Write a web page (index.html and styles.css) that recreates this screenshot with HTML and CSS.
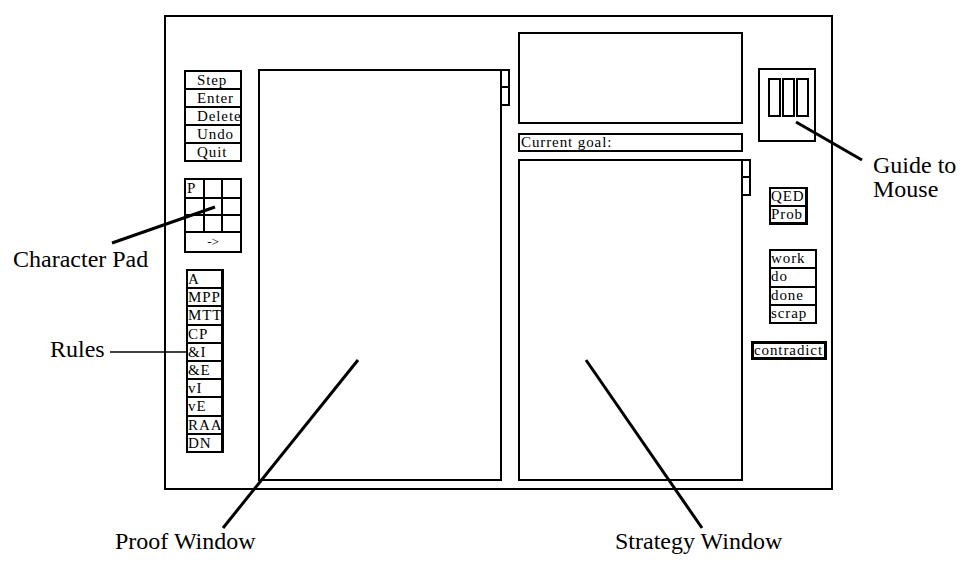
FILE: index.html
```html
<!DOCTYPE html>
<html>
<head>
<meta charset="utf-8">
<link rel="stylesheet" href="styles.css">
</head>
<body>
<div class="figure">
  <div class="frame">
    <div class="col-left">
      <div class="btns">
        <div class="btn">Step</div>
        <div class="btn">Enter</div>
        <div class="btn">Delete</div>
        <div class="btn">Undo</div>
        <div class="btn">Quit</div>
      </div>
      <div class="pad">
        <div class="cell">P</div><div class="cell"></div><div class="cell"></div>
        <div class="cell"></div><div class="cell"></div><div class="cell"></div>
        <div class="cell"></div><div class="cell"></div><div class="cell"></div>
        <div class="arrow">-&gt;</div>
      </div>
      <div class="rules">
        <div class="rule">A</div>
        <div class="rule">MPP</div>
        <div class="rule">MTT</div>
        <div class="rule">CP</div>
        <div class="rule">&amp;I</div>
        <div class="rule">&amp;E</div>
        <div class="rule">vI</div>
        <div class="rule">vE</div>
        <div class="rule">RAA</div>
        <div class="rule">DN</div>
      </div>
    </div>
    <div class="col-proof">
      <div class="win">
        <div class="tabs"><div class="tab"></div><div class="tab"></div></div>
      </div>
    </div>
    <div class="col-mid">
      <div class="topbox"></div>
      <div class="goal">Current goal:</div>
      <div class="win strategy">
        <div class="tabs"><div class="tab"></div><div class="tab"></div></div>
      </div>
    </div>
    <div class="col-right">
      <div class="guide">
        <div class="mouse"><div class="mbtn"></div><div class="mbtn"></div><div class="mbtn"></div></div>
      </div>
      <div class="stack qed"><div class="item">QED</div><div class="item">Prob</div></div>
      <div class="stack work">
        <div class="item">work</div>
        <div class="item">do</div>
        <div class="item">done</div>
        <div class="item">scrap</div>
      </div>
      <div class="contra">contradict</div>
    </div>
  </div>

  <svg class="leaders" width="974" height="566" viewBox="0 0 974 566">
    <line x1="796" y1="122" x2="862" y2="160" class="thick"/>
    <line x1="215" y1="207" x2="112" y2="243" class="thick"/>
    <line x1="110" y1="352" x2="187" y2="352" class="thin"/>
    <line x1="358" y1="360" x2="223" y2="528" class="thick"/>
    <line x1="586" y1="360" x2="702" y2="528" class="thick"/>
  </svg>

  <div class="lbl l-guide">Guide to<br>Mouse</div>
  <div class="lbl l-pad">Character Pad</div>
  <div class="lbl l-rules">Rules</div>
  <div class="lbl l-proof">Proof Window</div>
  <div class="lbl l-strat">Strategy Window</div>
</div>
</body>
</html>
```

FILE: styles.css
```css
* { box-sizing: border-box; }
body {
  margin: 0;
  background: #fff;
  color: #000;
  font-family: "Liberation Serif", "Times New Roman", serif;
}
.figure {
  position: relative;
  width: 974px;
  height: 566px;
  padding: 15px 0 0 164px;
  overflow: hidden;
}
.frame {
  width: 669px;
  height: 475px;
  border: 2px solid #000;
  display: flex;
  padding: 0 4px 7px 18px;
  font-size: 15px;
  letter-spacing: 0.9px;
}

/* left column */
.col-left {
  width: 58px;
  padding-top: 53px;
  display: flex;
  flex-direction: column;
  gap: 16px;
}
.btns {
  display: flex;
  flex-direction: column;
  gap: 2px;
  background: #000;
  padding: 2px;
  height: 92px;
}
.btn {
  flex: 1;
  background: #fff;
  line-height: 16px;
  padding-left: 11px;
  white-space: nowrap;
  overflow-x: clip;
  overflow-y: visible;
}
.pad {
  display: grid;
  grid-template-columns: repeat(3, 1fr);
  grid-template-rows: 17px 15px 15px 18px;
  gap: 2px;
  background: #000;
  padding: 2px;
  height: 75px;
  width: 58px;
}
.cell {
  background: #fff;
  line-height: 16px;
  padding-left: 1px;
}
.arrow {
  grid-column: 1 / 4;
  background: #fff;
  font-size: 13px;
  line-height: 18px;
  text-align: center;
  letter-spacing: 0;
}
.rules {
  margin-left: 2px;
  width: 38px;
  height: 184px;
  display: flex;
  flex-direction: column;
  gap: 2px;
  background: #000;
  padding: 2px 3px 2px 2px;
}
.rule {
  flex: 1;
  background: #fff;
  line-height: 16px;
  white-space: nowrap;
  overflow-x: clip;
  overflow-y: visible;
}

/* windows */
.col-proof {
  width: 244px;
  margin-left: 16px;
  padding-top: 52px;
  display: flex;
  flex-direction: column;
}
.win {
  flex: 1;
  border: 2px solid #000;
  position: relative;
}
.tabs {
  position: absolute;
  left: 100%;
  top: -2px;
  width: 10px;
  display: flex;
  flex-direction: column;
}
.tab {
  height: 19px;
  border: 2px solid #000;
  border-left: none;
}
.tab + .tab { border-top: none; height: 18px; }

.col-mid {
  width: 225px;
  margin-left: 16px;
  padding-top: 15px;
  display: flex;
  flex-direction: column;
}
.topbox {
  height: 92px;
  border: 2px solid #000;
}
.goal {
  margin-top: 9px;
  height: 19px;
  border: 2px solid #000;
  line-height: 15px;
  padding-left: 1px;
}
.strategy { margin-top: 7px; }

/* right column */
.col-right {
  width: 76px;
  margin-left: 8px;
  padding-top: 51px;
  display: flex;
  flex-direction: column;
  align-items: flex-start;
}
.guide {
  margin-left: 7px;
  width: 58px;
  height: 74px;
  border: 2px solid #000;
  padding: 8px 0 0 8px;
}
.mouse {
  display: flex;
  gap: 1px;
}
.mbtn {
  width: 13px;
  height: 39px;
  border: 2px solid #000;
}
.stack {
  margin-left: 18px;
  display: flex;
  flex-direction: column;
  gap: 2px;
  background: #000;
}
.qed {
  margin-top: 45px;
  width: 39px;
  height: 38px;
  padding: 2px 3px 3px 2px;
}
.work {
  margin-top: 24px;
  width: 48px;
  height: 75px;
  padding: 2px;
}
.item {
  flex: 1;
  background: #fff;
  line-height: 15px;
  white-space: nowrap;
  overflow-x: clip;
  overflow-y: visible;
}
.contra {
  margin-top: 17px;
  width: 76px;
  height: 19px;
  border: 3px solid #000;
  line-height: 13px;
  white-space: nowrap;
  overflow-x: clip;
  overflow-y: visible;
}

/* annotations */
.leaders {
  position: absolute;
  left: 0;
  top: 0;
  pointer-events: none;
}
.leaders line { stroke: #000; }
.leaders .thick { stroke-width: 3; }
.leaders .thin { stroke-width: 1.5; }
.lbl {
  position: absolute;
  font-size: 24px;
  line-height: 24px;
  white-space: nowrap;
}
.l-guide { left: 873px; top: 153px; }
.l-pad { left: 13px; top: 247px; }
.l-rules { left: 50px; top: 337px; }
.l-proof { left: 115px; top: 529px; }
.l-strat { left: 615px; top: 529px; }
```
